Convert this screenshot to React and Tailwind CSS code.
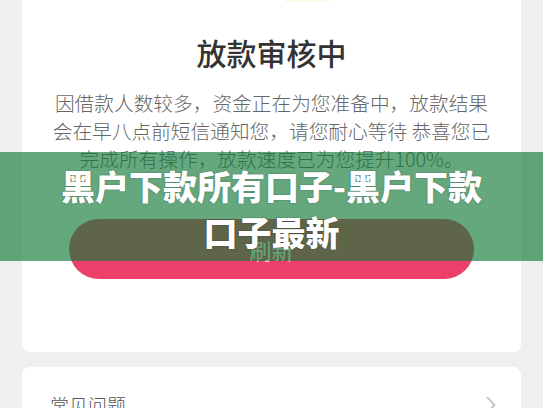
import React from "react";

export default function App() {
  const cjk = { fontFamily: '"Noto Sans CJK SC", "Noto Sans", sans-serif' };
  return (
    <div
      className="relative h-[408px] overflow-hidden bg-[#efefef] px-[22px]"
      style={cjk}
    >
      {/* main card */}
      <div className="rounded-b-[8px] bg-white pb-[73px]">
        <div className="ml-[263px] h-[2px] w-[45px] rounded-b-full bg-[#fbf8ea]" />
        <h1 className="mt-[30px] text-center text-[30px] font-medium leading-[40px] text-[#333333]">
          放款审核中
        </h1>
        <p className="mx-auto mt-[17px] w-[446px] text-center text-[19.7px] font-light leading-[28px] text-[#666666]">
          因借款人数较多，资金正在为您准备中，放款结果会在早八点前短信通知您，请您耐心等待 恭喜您已完成所有操作，放款速度已为您提升100%。
        </p>
        <button className="mx-auto mt-[46px] flex h-[60px] w-[405px] items-center justify-center rounded-full bg-[#ea4069] text-[22px] text-white">
          刷新
        </button>
      </div>

      {/* second card */}
      <div className="mt-[15px] flex items-center justify-between rounded-[8px] bg-white pl-[28px] pr-[25px] pt-[24px] pb-[24px]">
        <span className="text-[19px] font-light leading-[28px] text-[#555555]">常见问题</span>
        <svg width="10" height="18" viewBox="0 0 10 18" fill="none">
          <polyline
            points="1.5,1.5 8.5,9 1.5,16.5"
            stroke="#c8c8c8"
            strokeWidth="2"
            strokeLinecap="round"
            strokeLinejoin="round"
          />
        </svg>
      </div>

      {/* overlay banner */}
      <div className="absolute left-0 right-0 top-[152px] flex h-[109px] justify-center bg-[rgba(20,121,57,0.65)] pt-[11px]">
        <div className="w-[430px] text-center text-[34px] font-black leading-[46px] text-white [text-shadow:0_0_2px_rgba(0,0,0,0.35)]">
          黑户下款所有口子-黑户下款口子最新
        </div>
      </div>
    </div>
  );
}
